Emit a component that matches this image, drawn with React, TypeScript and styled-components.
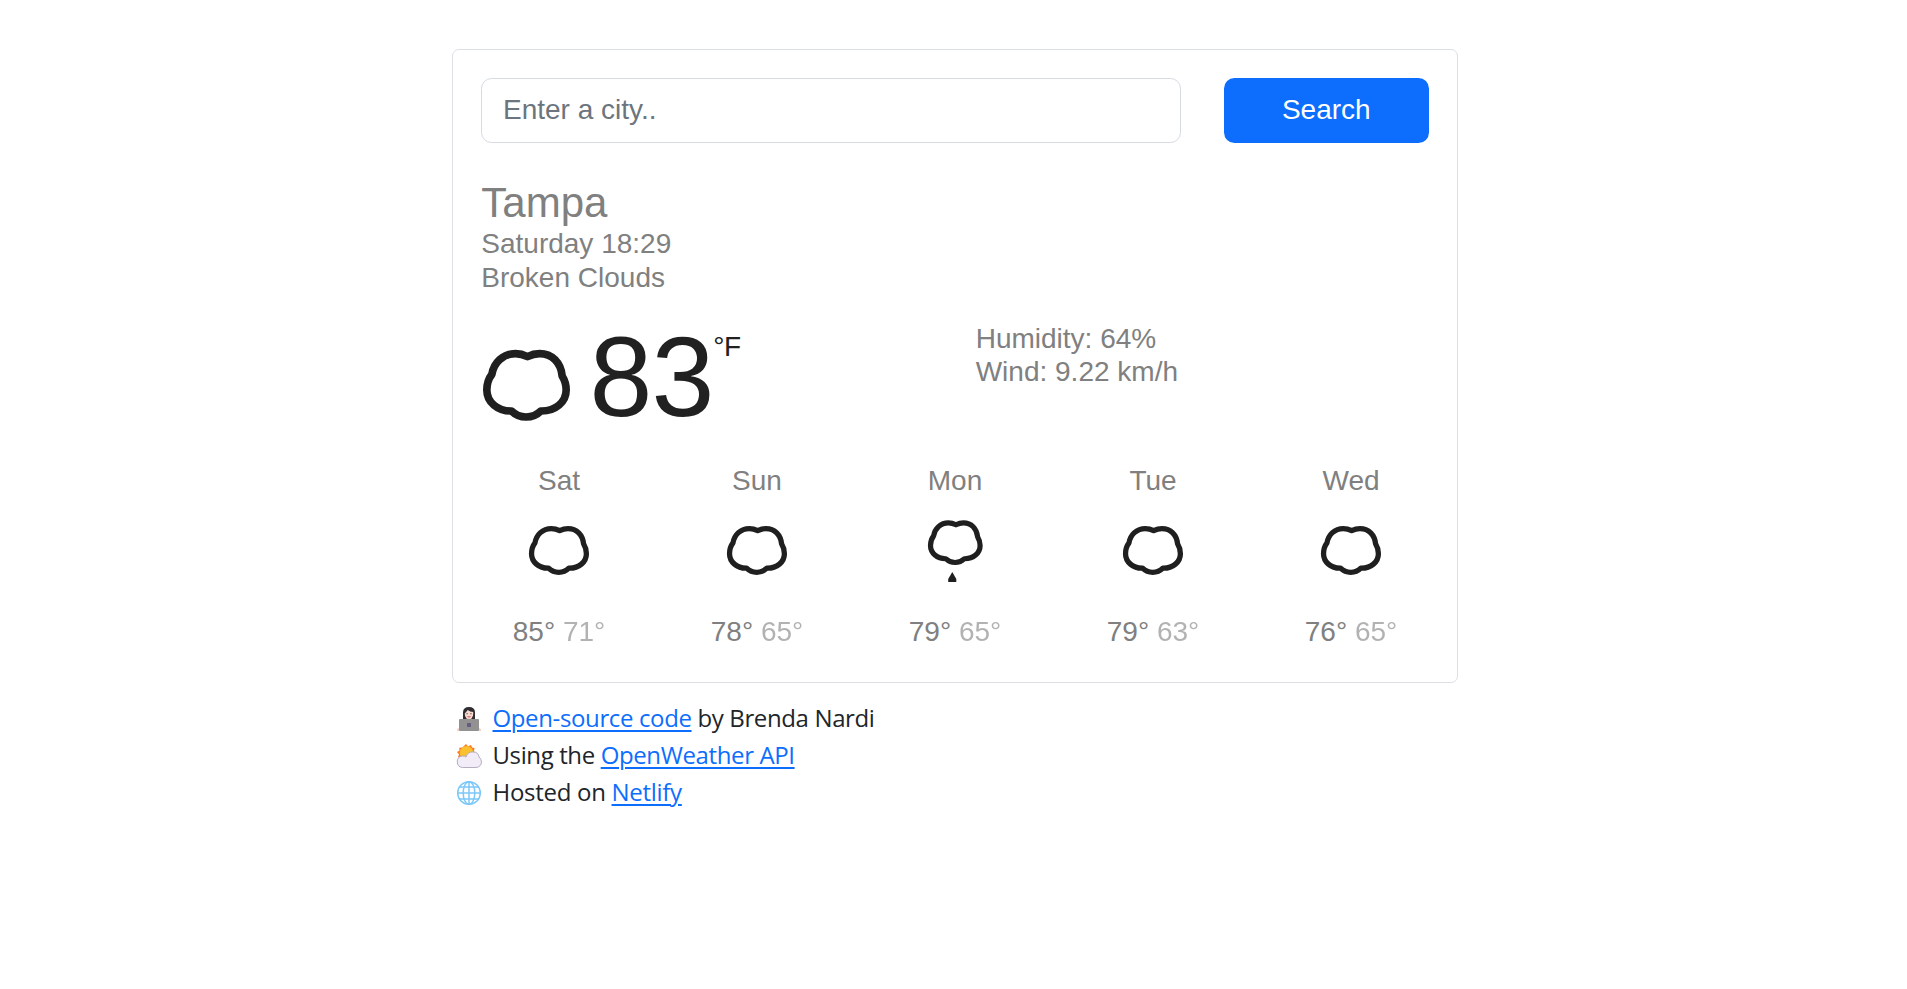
import React from "react";
import styled, { createGlobalStyle } from "styled-components";

const GlobalStyle = createGlobalStyle`
  *, *::before, *::after { box-sizing: border-box; }
  body { margin: 0; background: #fff; color: #212529; }
`;

const Page = styled.div`
  width: 1006px;
  margin: 0 auto;
  padding-top: 49px;
  position: relative;
  left: 1.5px;
  font-family: "Liberation Sans", Arial, sans-serif;
  font-size: 28px;
  line-height: 33.6px;
`;

const Card = styled.main`
  height: 634px;
  padding: 28px;
  border: 1px solid #dcdfe3;
  border-radius: 7px;
  color: gray;
`;

const SearchForm = styled.form`
  display: flex;
  gap: 42.5px;
  height: 65px;
`;

const CityInput = styled.input`
  width: 700px;
  padding: 0 21px 2px;
  border: 1px solid #d5dbe1;
  border-radius: 10.5px;
  font: inherit;
  color: #212529;
  outline: none;
  &::placeholder { color: #6c757d; opacity: 1; }
`;

const SearchButton = styled.button`
  flex: 1;
  padding: 0 0 2px;
  border: 0;
  border-radius: 10.5px;
  background: #0d6efd;
  color: #fff;
  font: inherit;
`;

const Overview = styled.section`
  margin-top: 34px;
  padding-left: 0.3px;
`;

const City = styled.h1`
  margin: 0;
  padding-top: 0.6px;
  height: 50.4px;
  font-size: 42px;
  font-weight: 400;
  line-height: 50.4px;
`;

const Detail = styled.div`
  white-space: nowrap;
`;

const Current = styled.section`
  display: grid;
  grid-template-columns: 494.7px 1fr;
  margin-top: 17.2px;
`;

const Temperature = styled.div`
  display: flex;
  align-items: flex-start;
  height: 135px;
  color: #212121;
`;

const MainIcon = styled.svg`
  width: 87px;
  height: 71px;
  margin: 38px 19.5px 0 2px;
  overflow: visible;
  filter: blur(0.4px);
`;

const Degrees = styled.span`
  font-size: 113px;
  line-height: 131px;
  letter-spacing: -0.8px;
`;

const Unit = styled.span`
  margin: 18px 0 0 -0.3px;
  letter-spacing: -0.5px;
`;

const Conditions = styled.div`
  margin-top: 10px;
`;

const Forecast = styled.section`
  display: grid;
  grid-template-columns: repeat(5, 1fr);
  margin: 17px -21px 0;
`;

const Day = styled.div`
  display: flex;
  flex-direction: column;
  align-items: center;
`;

const DayIcon = styled.svg`
  width: 88px;
  height: 88px;
  margin: 13px 0 17px;
  filter: blur(0.4px);
`;

const Low = styled.span`
  opacity: 0.6;
`;

const Footer = styled.footer`
  padding: 18px 0 0 4px;
  font-family: "Open Sans", "Noto Sans", sans-serif;
  font-size: 24px;
  line-height: 36.75px;
`;

const Credit = styled.div<{ $spacing: number }>`
  display: flex;
  align-items: center;
  gap: 10.5px;
  letter-spacing: ${({ $spacing }) => $spacing}px;
  white-space: nowrap;
`;

const CreditText = styled.span`
  margin-top: -1px;
  height: 37.75px;
`;

const CreditIcon = styled.svg`
  width: 26px;
  height: 26px;
`;

const Link = styled.a`
  color: #0d6efd;
  text-decoration: underline;
  text-decoration-thickness: 2px;
  text-underline-offset: 3px;
`;

const cloud =
  "M202 140C190 134 180 131 166 131C128 131 101 158 95 193C85 206 80 222 80 240C80 276 112 304 154 303C166 315 180 321 198 321C216 321 230 315 242 303C286 304 318 276 318 240C318 224 314 211 306 198C302 158 276 131 238 131C224 131 214 134 202 140Z";

const CloudShape = ({ stroke = 23 }: { stroke?: number }) => (
  <path d={cloud} fill="none" stroke="#1f1f1f" strokeWidth={stroke} strokeLinejoin="round" />
);

const SmallCloud = () => (
  <DayIcon viewBox="0 0 88 88">
    <g transform="translate(14 16) scale(.2305) translate(-69 -120)"><CloudShape /></g>
  </DayIcon>
);

const RainCloud = () => (
  <DayIcon viewBox="0 0 88 88">
    <g transform="translate(17.2 10.6) scale(.2085) translate(-69 -120)"><CloudShape stroke={25} /></g>
    <path d="M41.3 62L45.3 69V72H37.2V69Z" fill="#1f1f1f" />
  </DayIcon>
);

const Coder = () => (
  <CreditIcon viewBox="0 0 26 26">
    <path d="M7 14V6.5Q7 1 13 1T19 6.5V14Z" fill="#302d32" />
    <path d="M10.5 11H15.5V15H10.5Z" fill="#e9b9aa" />
    <path d="M8.8 7.5L11.8 4Q14 6 17.2 6V8Q17 12.8 13 12.8T8.8 8Z" fill="#f8dace" />
    <path d="M10.5 7.7H11.7M14.3 7.7H15.5" stroke="#4a3836" strokeWidth="1.1" />
    <path d="M11.5 10.5Q13 11.7 14.5 10.5" fill="none" stroke="#ce4d58" />
    <path d="M1 23.5Q1.5 21.5 4 22V25H1ZM25 23.5Q24.5 21.5 22 22V25H25Z" fill="#f6d2c4" />
    <rect x="3" y="13" width="20" height="12" rx="1" fill="#929292" />
    <rect x="11" y="17" width="4" height="4" fill="#665c7e" />
  </CreditIcon>
);

const SunCloud = () => (
  <CreditIcon viewBox="0 0 26 26">
    <path d="M10 1L12 3.2L15 2L16 4.5L18.5 5L18 8L19 11L10 18L2 14L3 11.5L1 9L3.5 7.6L3.2 4.8L6.3 4.5Z" fill="#fa7a27" />
    <circle cx="10.5" cy="9.8" r="6.8" fill="#fbc02d" />
    <path d="M6.4 24.5A5.8 5.8 0 0 1 6.2 13Q8.5 12.7 10 14Q11.5 8.7 17 8.9T23 14Q25.5 16 25.5 19Q25 24 20 24.5Z" fill="#f1ecf8" stroke="#b3adbd" strokeWidth="1" />
  </CreditIcon>
);

const Globe = () => (
  <CreditIcon viewBox="0 0 26 26" fill="none" stroke="#7cc8f8" strokeWidth="1.5">
    <circle cx="13" cy="13" r="11.3" />
    <ellipse cx="13" cy="13" rx="5.8" ry="11.3" />
    <path d="M13 1.7V24.3M1.7 13H24.3M3.5 7H22.5M3.5 19H22.5" />
  </CreditIcon>
);

const days = [
  { name: "Sat", high: 85, low: 71 },
  { name: "Sun", high: 78, low: 65 },
  { name: "Mon", high: 79, low: 65, rain: true },
  { name: "Tue", high: 79, low: 63 },
  { name: "Wed", high: 76, low: 65 },
];

export default function App() {
  return (
    <>
      <GlobalStyle />
      <Page>
        <Card>
          <SearchForm onSubmit={(e) => e.preventDefault()}>
            <CityInput placeholder="Enter a city.." />
            <SearchButton type="submit">Search</SearchButton>
          </SearchForm>
          <Overview>
            <City>Tampa</City>
            <Detail>Saturday 18:29</Detail>
            <Detail>Broken Clouds</Detail>
          </Overview>
          <Current>
            <Temperature>
              <MainIcon viewBox="69 120 260 213"><CloudShape /></MainIcon>
              <Degrees>83</Degrees>
              <Unit>°F</Unit>
            </Temperature>
            <Conditions>
              <Detail>Humidity: 64%</Detail>
              <Detail>Wind: 9.22 km/h</Detail>
            </Conditions>
          </Current>
          <Forecast>
            {days.map((day) => (
              <Day key={day.name}>
                <Detail>{day.name}</Detail>
                {day.rain ? <RainCloud /> : <SmallCloud />}
                <Detail>{day.high}° <Low>{day.low}°</Low></Detail>
              </Day>
            ))}
          </Forecast>
        </Card>
        <Footer>
          <Credit $spacing={-0.37}><Coder /><CreditText><Link href="#">Open-source code</Link> by Brenda Nardi</CreditText></Credit>
          <Credit $spacing={-0.38}><SunCloud /><CreditText>Using the <Link href="#">OpenWeather API</Link></CreditText></Credit>
          <Credit $spacing={-0.29}><Globe /><CreditText>Hosted on <Link href="#">Netlify</Link></CreditText></Credit>
        </Footer>
      </Page>
    </>
  );
}
